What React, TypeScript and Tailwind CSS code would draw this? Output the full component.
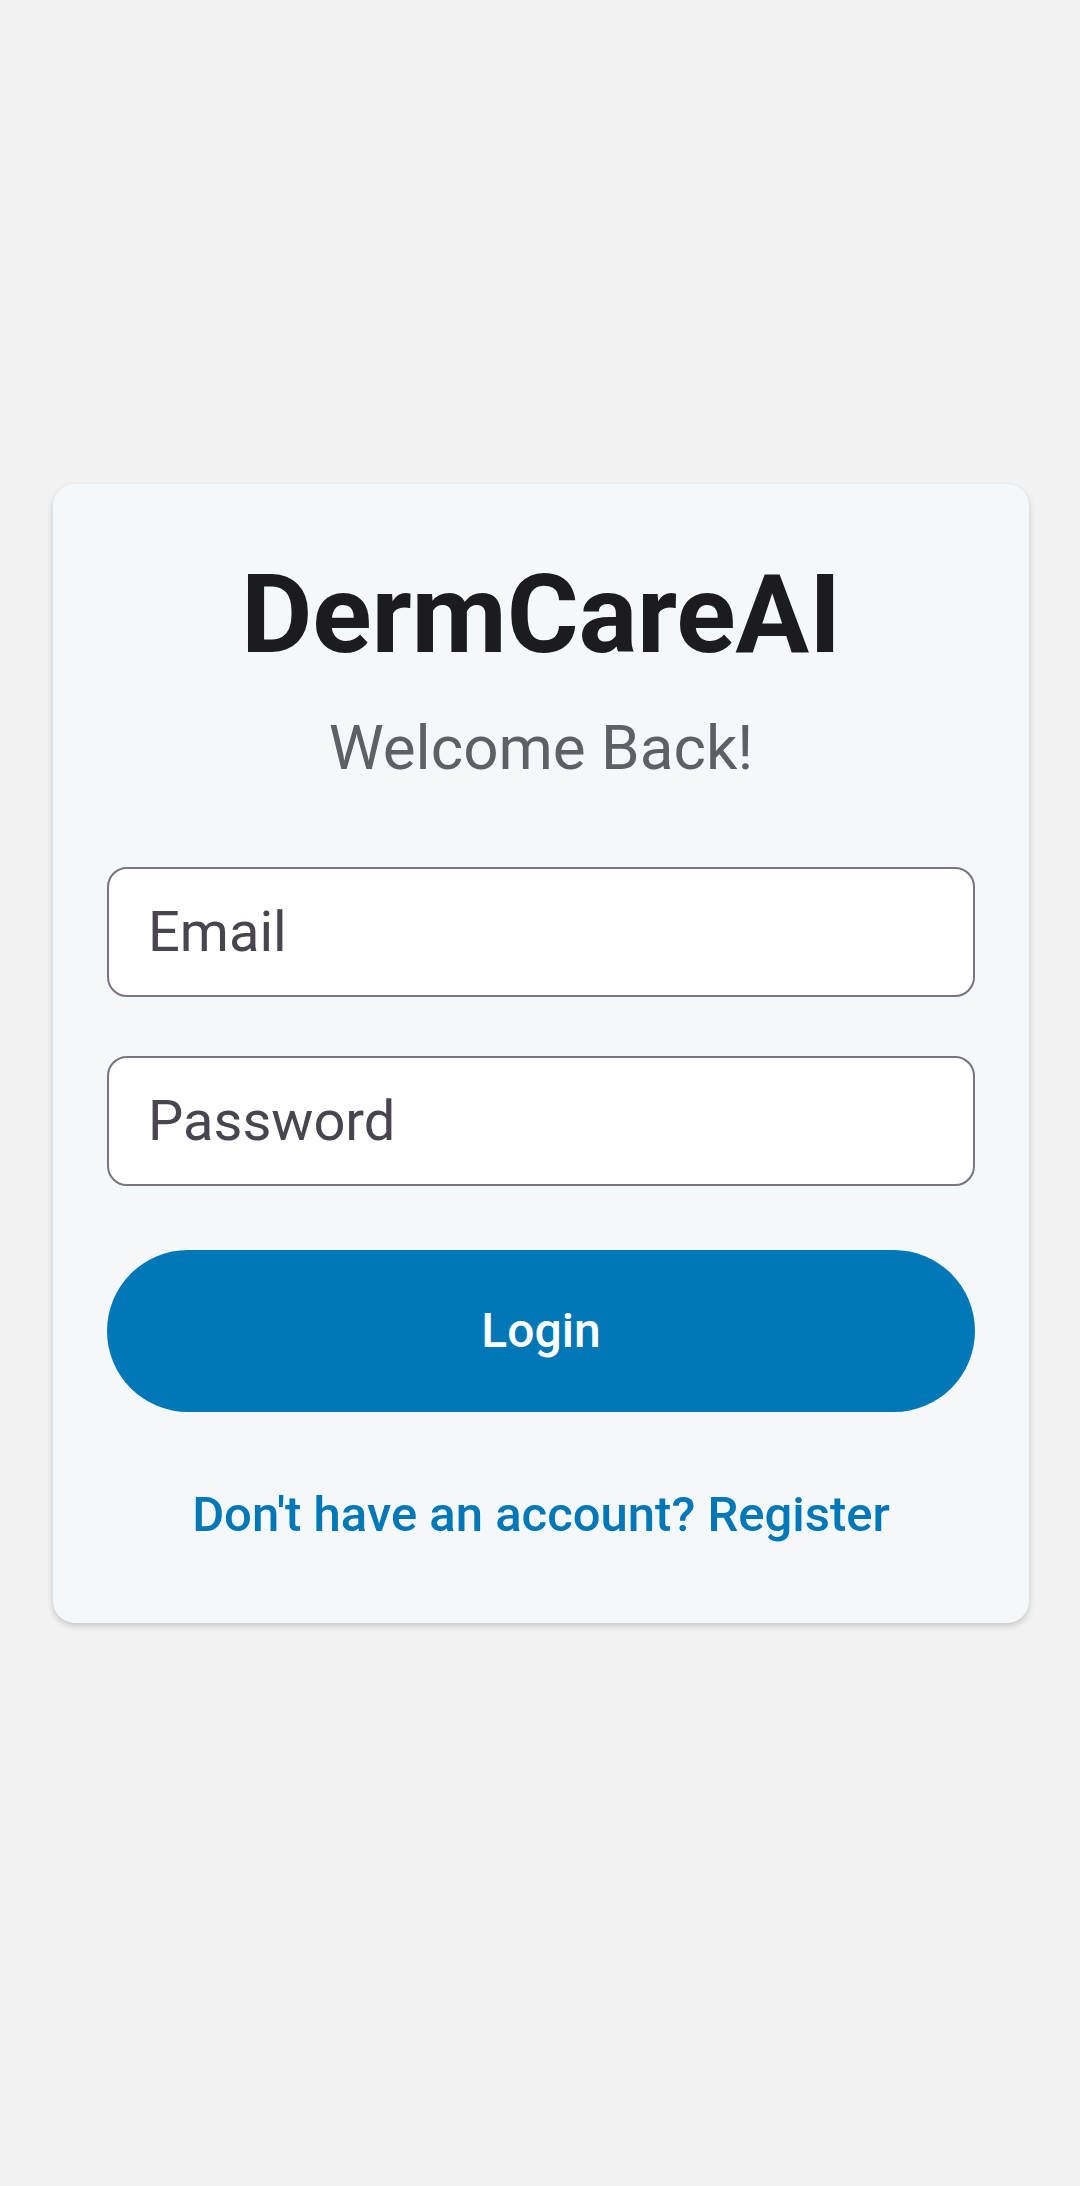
import React from "react";

const App = () => {
  return (
    <div
      className="min-h-[2186px] w-full bg-[#f2f2f2] flex items-center justify-center pl-[53px] pr-[51px] pb-[80px]"
      style={{ fontFamily: "Roboto, 'Noto Sans', sans-serif" }}
    >
      <div className="w-full bg-[#f5f8fb] rounded-[22px] shadow-[0_3px_6px_rgba(0,0,0,0.18)] px-[54px] pt-[66px] pb-[79px] flex flex-col items-center">
        <h1 className="text-[110px] leading-[130px] font-bold text-[#1c1b20] tracking-[-0.2px]">
          DermCareAI
        </h1>
        <p className="mt-[30px] text-[62px] leading-[76px] text-[#5f6066]">
          Welcome Back!
        </p>

        <div className="mt-[81px] w-full flex flex-col gap-[59px]">
          <input
            type="email"
            placeholder="Email"
            className="w-full h-[130px] bg-white border-[2.5px] border-[#79747e] rounded-[20px] px-[39px] text-[56px] text-[#1c1b20] placeholder:text-[#49454f] outline-none"
          />
          <input
            type="password"
            placeholder="Password"
            className="w-full h-[130px] bg-white border-[2.5px] border-[#79747e] rounded-[20px] px-[39px] text-[56px] text-[#1c1b20] placeholder:text-[#49454f] outline-none"
          />
        </div>

        <button className="mt-[64px] w-full h-[162px] rounded-full bg-[#0077b6] text-white text-[48px] font-medium">
          Login
        </button>

        <a className="mt-[74px] text-[49px] leading-[58px] font-medium text-[#0077b6]">
          Don't have an account? Register
        </a>
      </div>
    </div>
  );
};

export default App;
